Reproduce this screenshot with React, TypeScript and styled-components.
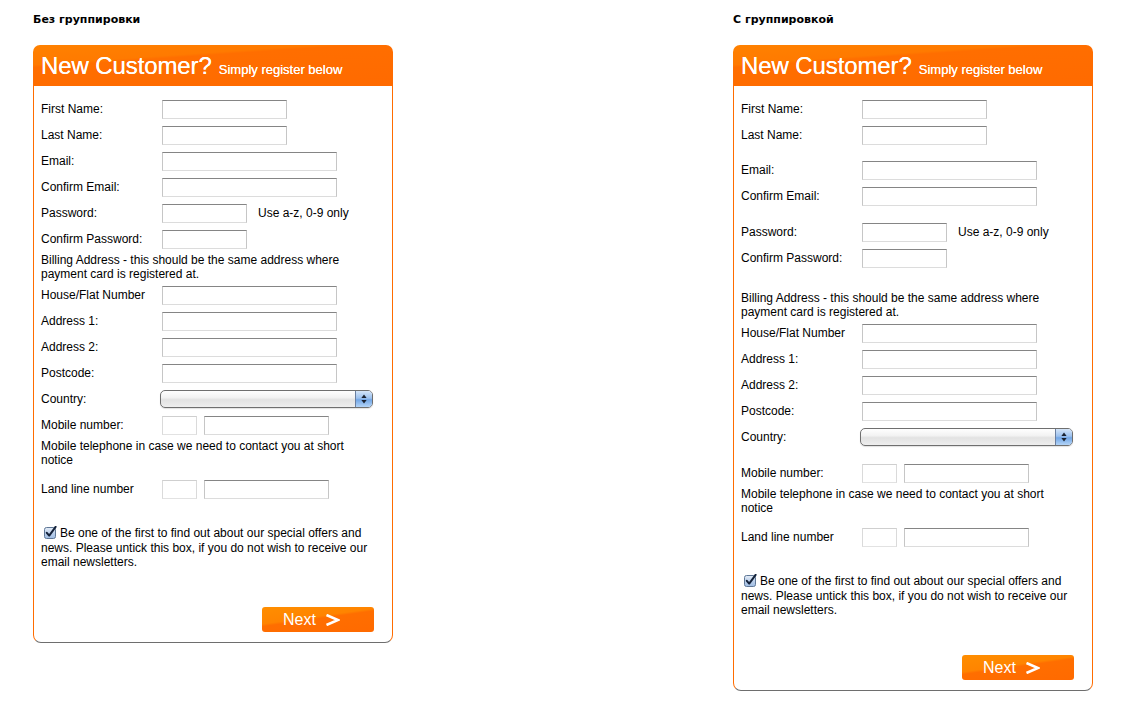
import React from "react";
import styled, { createGlobalStyle } from "styled-components";

const Global = createGlobalStyle`
  html, body { margin: 0; padding: 0; background: #fff; }
  body { font-family: "Liberation Sans", Arial, Helvetica, sans-serif; color: #000; }
`;

const Page = styled.div`
  display: grid;
  grid-template-columns: 700px 360px;
  padding: 13px 0 0 33px;
  align-items: start;
`;

const Column = styled.section`
  display: flex;
  flex-direction: column;
`;

const Heading = styled.h2`
  margin: 0 0 18px;
  font: bold 11px/14px "DejaVu Sans", Verdana, sans-serif;
  color: #000;
`;

const Card = styled.div`
  width: 360px;
  display: flex;
  flex-direction: column;
`;

const Header = styled.h1`
  margin: 0;
  height: 41px;
  padding: 0 8px;
  border-radius: 7px 7px 0 0;
  background: linear-gradient(176deg, #ff8100 0%, #ff7a00 30%, #ff6e00 34%, #ff6a00 100%);
  color: #fff;
  font-weight: normal;
  font-size: 24px;
  line-height: 41px;
  letter-spacing: -0.1px;
  white-space: nowrap;
  text-shadow: 0 0 0.4px #fff;
`;

const Sub = styled.span`
  font-size: 13px;
  letter-spacing: 0;
  margin-left: 7px;
`;

const Body = styled.div`
  border: 1px solid #ff6c00;
  border-top: none;
  border-bottom-color: #6e6e6e;
  border-radius: 0 0 8px 8px;
  padding: 10px 18px 10px 7px;
  font-size: 12px;
  line-height: 14px;
`;

const Group = styled.div<{ $gap: number }>`
  margin-top: ${(p) => p.$gap}px;
`;

const Row = styled.div`
  display: flex;
  align-items: center;
  min-height: 26px;
`;

const Label = styled.label`
  width: 121px;
  flex: none;
  white-space: nowrap;
`;

const Input = styled.input<{ $w: number; $light?: boolean }>`
  box-sizing: border-box;
  width: ${(p) => p.$w}px;
  height: 19px;
  margin: 0;
  padding: 1px 3px;
  border: 1px solid ${(p) => (p.$light ? "#dadada" : "#c6c6c6")};
  border-top-color: ${(p) => (p.$light ? "#cfcfcf" : "#858585")};
  border-bottom-color: ${(p) => (p.$light ? "#e2e2e2" : "#dcdcdc")};
  background: #fff;
  font: 12px "Liberation Sans", Arial, sans-serif;
  outline: none;
  & + & {
    margin-left: 7px;
  }
`;

const Hint = styled.span`
  margin-left: 11px;
`;

const Note = styled.div<{ $after: number }>`
  margin: 1px 0 ${(p) => p.$after}px;
  white-space: nowrap;
`;

const Select = styled.div`
  display: flex;
  box-sizing: border-box;
  width: 213px;
  height: 18px;
  margin-left: -2px;
  border: 1px solid #6f6f6f;
  border-radius: 5px;
  overflow: hidden;
  background: linear-gradient(#fefefe 0%, #f3f3f3 40%, #e2e2e2 55%, #eeeeee 100%);
  box-shadow: 0 1px 1px rgba(0, 0, 0, 0.12);
`;

const SelectValue = styled.div`
  flex: 1;
`;

const Stepper = styled.div`
  width: 16px;
  border-left: 1px solid #6a7fa0;
  background: linear-gradient(#d5e5f8 0%, #9cc1ee 45%, #72a6e6 55%, #b3d4f7 100%);
  display: flex;
  align-items: center;
  justify-content: center;
`;

const Consent = styled.p`
  margin: 23px 0 0;
  white-space: nowrap;
`;

const ConsentFirst = styled.span`
  display: block;
  line-height: 16px;
`;

const CheckIcon = styled.svg`
  vertical-align: -2px;
  margin: 0 3px 0 3px;
`;

const Actions = styled.div`
  display: flex;
  justify-content: flex-end;
  margin-top: 38px;
`;

const NextButton = styled.button`
  display: flex;
  align-items: center;
  gap: 9px;
  box-sizing: border-box;
  width: 112px;
  height: 25px;
  padding: 0 0 0 21px;
  border: none;
  border-radius: 3px;
  background: linear-gradient(172deg, #ff8e00 0%, #ff8400 42%, #ff6e00 48%, #ff6a00 100%);
  color: #fff;
  font: 16px "Liberation Sans", Arial, sans-serif;
  cursor: pointer;
`;

type FormProps = { grouped: boolean };

const RegistrationForm: React.FC<FormProps> = ({ grouped }) => {
  const g = (n: number) => (grouped ? n : 0);
  const gid = grouped ? "cbg2" : "cbg1";
  return (
    <Card>
      <Header>
        New Customer?<Sub>Simply register below</Sub>
      </Header>
      <Body>
        <Group $gap={0}>
          <Row>
            <Label>First Name:</Label>
            <Input $w={125} />
          </Row>
          <Row>
            <Label>Last Name:</Label>
            <Input $w={125} />
          </Row>
        </Group>
        <Group $gap={g(9)}>
          <Row>
            <Label>Email:</Label>
            <Input $w={175} />
          </Row>
          <Row>
            <Label>Confirm Email:</Label>
            <Input $w={175} />
          </Row>
        </Group>
        <Group $gap={g(10)}>
          <Row>
            <Label>Password:</Label>
            <Input $w={85} type="password" />
            <Hint>Use a-z, 0-9 only</Hint>
          </Row>
          <Row>
            <Label>Confirm Password:</Label>
            <Input $w={85} type="password" />
          </Row>
        </Group>
        <Group $gap={g(20)}>
          <Note $after={1}>
            Billing Address - this should be the same address where
            <br />
            payment card is registered at.
          </Note>
          <Row>
            <Label>House/Flat Number</Label>
            <Input $w={175} />
          </Row>
          <Row>
            <Label>Address 1:</Label>
            <Input $w={175} />
          </Row>
          <Row>
            <Label>Address 2:</Label>
            <Input $w={175} />
          </Row>
          <Row>
            <Label>Postcode:</Label>
            <Input $w={175} />
          </Row>
          <Row>
            <Label>Country:</Label>
            <Select role="combobox">
              <SelectValue />
              <Stepper>
                <svg width="6" height="10" viewBox="0 0 6 10">
                  <path d="M3 0.5 L5.6 4 L0.4 4 Z" fill="#1b2230" />
                  <path d="M3 9.5 L5.6 6 L0.4 6 Z" fill="#1b2230" />
                </svg>
              </Stepper>
            </Select>
          </Row>
        </Group>
        <Group $gap={g(10)}>
          <Row>
            <Label>Mobile number:</Label>
            <Input $w={35} $light />
            <Input $w={125} />
          </Row>
          <Note $after={9}>
            Mobile telephone in case we need to contact you at short
            <br />
            notice
          </Note>
          <Row>
            <Label>Land line number</Label>
            <Input $w={35} $light />
            <Input $w={125} />
          </Row>
        </Group>
        <Consent>
          <ConsentFirst>
            <CheckIcon width="13" height="13" viewBox="0 0 13 13">
              <defs>
                <linearGradient id={gid} x1="0" y1="0" x2="0" y2="1">
                  <stop offset="0" stopColor="#e6eef8" />
                  <stop offset="0.5" stopColor="#bcd0ea" />
                  <stop offset="1" stopColor="#9fbde4" />
                </linearGradient>
              </defs>
              <rect
                x="0.5"
                y="1.5"
                width="11"
                height="11"
                rx="2"
                fill={`url(#${gid})`}
                stroke="#5f7796"
              />
              <path
                d="M2.8 6.8 L5.2 9.6 L11.6 0.8"
                fill="none"
                stroke="#14223a"
                strokeWidth="2"
                strokeLinejoin="round"
                strokeLinecap="round"
              />
            </CheckIcon>
            Be one of the first to find out about our special offers and
          </ConsentFirst>
          news. Please untick this box, if you do not wish to receive our
          <br />
          email newsletters.
        </Consent>
        <Actions>
          <NextButton type="button">
            Next
            <svg width="15" height="12" viewBox="0 0 15 12">
              <path
                d="M1.5 1 L13 6 L1.5 11"
                fill="none"
                stroke="#fff"
                strokeWidth="2.6"
                strokeLinejoin="miter"
              />
            </svg>
          </NextButton>
        </Actions>
      </Body>
    </Card>
  );
};

export default function App() {
  return (
    <>
      <Global />
      <Page>
        <Column>
          <Heading>Без группировки</Heading>
          <RegistrationForm grouped={false} />
        </Column>
        <Column>
          <Heading>С группировкой</Heading>
          <RegistrationForm grouped={true} />
        </Column>
      </Page>
    </>
  );
}
